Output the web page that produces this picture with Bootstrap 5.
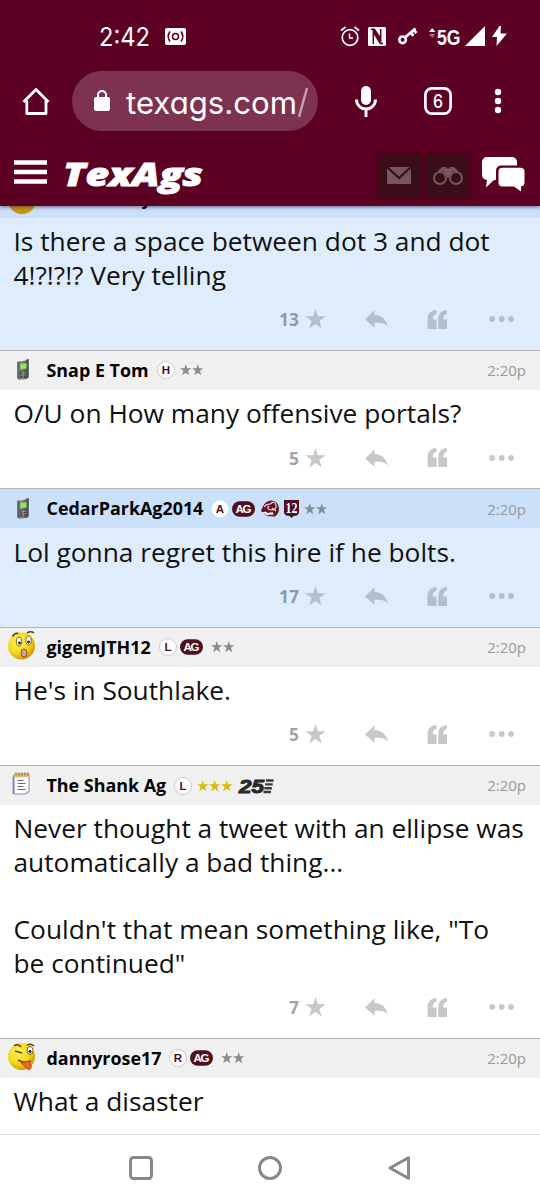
<!DOCTYPE html>
<html lang="en">
<head>
<meta charset="utf-8">
<meta name="viewport" content="width=device-width, initial-scale=1">
<title>TexAgs</title>
<link href="https://cdn.jsdelivr.net/npm/bootstrap@5.3.0/dist/css/bootstrap.min.css" rel="stylesheet">
<script src="https://cdn.jsdelivr.net/npm/bootstrap@5.3.0/dist/js/bootstrap.bundle.min.js"></script>
<style>
body{font-family:"Open Sans","Noto Sans",sans-serif;background:#fff;color:#111;width:540px;height:1200px;overflow:hidden}
svg{display:block;flex:none;overflow:visible}
.topbar{background:#5c0024;height:206px;color:#fff;z-index:2;box-shadow:0 1px 4px rgba(40,40,70,.65)}
.status{height:71px;padding-left:99px;padding-right:33px;padding-top:1px}
.browser{height:60px;padding-left:22px}
.omni{width:246px;height:60px;border-radius:30px;background:#7d3350;margin-left:22px;padding-left:22px}
.site{height:75px;padding-left:13px}
.tile{width:44px;height:44px;background:#3a0d18;box-shadow:0 0 3px #3a0d18}
.feed{margin-top:-28px}
.post{border-top:1px solid #b4b4b4}
.post-head{height:39px;background:#f0f0f0;padding-right:14px}
.post-body{padding:7.4px 13.5px 0;font-size:26.3px;line-height:33.6px;white-space:nowrap}
.post-actions{height:57.4px;padding-right:25px;padding-bottom:4px;color:#c8c8c8}
.hot{background:#deecfc}
.hot .post-head{background:#cbe0f9}
.hot .post-actions{color:#b3bfcb}
.hot .votes{color:#8f9aa6}
.votes{font-weight:700;font-size:17.5px;color:#a4a4a4;margin-right:6px}
.avatar{width:46.5px;padding-left:7px}
.who{font-weight:700;font-size:17.9px;color:#050505;white-space:nowrap}
.when{font-size:15px;color:#999}
.sysnav{height:66px;border-top:1px solid #d8d8d8;background:#fff;z-index:2}
</style>
</head>
<body class="d-flex flex-column">
<svg width="0" height="0" class="position-absolute">
<defs>
<linearGradient id="gPhone"><stop offset="0" stop-color="#4d4d4d"/><stop offset=".35" stop-color="#8d8d8d"/><stop offset="1" stop-color="#444"/></linearGradient>
<radialGradient id="gFace" cx=".38" cy=".35" r=".7"><stop offset="0" stop-color="#fff35a"/><stop offset=".6" stop-color="#f6d61c"/><stop offset="1" stop-color="#c99306"/></radialGradient>
<symbol id="star" viewBox="0 0 20 20"><path fill="currentColor" d="M10 0l2.400 7.200H20l-6.100 4.700 2.300 7.600L10 15l-6.200 4.500 2.300-7.600L0 7.200h7.600z"/></symbol>
<symbol id="reply" viewBox="0 0 23 20"><path fill="currentColor" d="M0 10.500L9.500 1.200v4.700C16.500 6 21 10 23 17.500 19.500 14 15.500 13.400 9.500 14v4.800z"/></symbol>
<symbol id="quote" viewBox="0 0 21 20"><path fill="currentColor" d="M0 20V10C0 4 3 .6 9.200 0l.6 3.500C6.800 4.500 5.500 6.500 5.500 10H9.500V20z"/><path fill="currentColor" d="M11.300 20V10C11.300 4 14.300 .6 20.200 0l.6 3.500C18 4.500 16.500 6.500 16.500 10h4V20z"/></symbol>
<symbol id="dots" viewBox="0 0 26 6"><g fill="currentColor"><circle cx="3.200" cy="3" r="2.900"/><circle cx="12.700" cy="3" r="2.900"/><circle cx="22" cy="3" r="2.900"/></g></symbol>
<symbol id="phone" viewBox="0 0 14 23"><path fill="url(#gPhone)" d="M1 3l9-1.500V.8L13 0v19l-2 2-8 .8-2-1.500z"/><path fill="#8eea5c" d="M4.200 5.200l6.500-.8v5.500l-6.500.6z"/><path fill="#484848" d="M3.800 12.500l6.700-.7v7l-6.700.8z"/><path stroke="#999" d="M4.500 14.500l5.500-.6M4.500 17l5.500-.6M7.200 12.500v6.500"/></symbol>
<symbol id="pad" viewBox="0 0 19 24"><path fill="#fafcff" stroke="#8791ad" d="M1.500 3L17 2.500V20l-3 2L2 22z"/><path fill="none" stroke="#7780ce" stroke-width="1.800" d="M1.500 4.500V22"/><path fill="#d9bd7c" d="M2 1.500L17 1v4L2 5.500z"/><path stroke="#786434" d="M4 .5v3M7 .5v3M10 .5v3M13 .5v3M16 .5v3"/><path stroke="#667" d="M5.500 8.500h6M5.500 11.500h8M5.500 14.500h6M5.500 17.500h8"/><path fill="#b7c2d6" d="M13.500 22v-2.500H17z"/></symbol>
<symbol id="starpair" viewBox="0 0 23 12"><use href="#star" width="11.500" height="11.500"/><use href="#star" x="12" width="11.500" height="11.500"/></symbol>
<symbol id="ag" viewBox="0 0 23 16"><rect y=".3" width="23" height="15.400" rx="7.700" fill="#500f20"/><text x="11.500" y="12.100" font-family="Liberation Sans" font-weight="700" font-size="11.500" fill="#fff" text-anchor="middle" textLength="16">AG</text></symbol>
</defs>
</svg>

<header class="topbar position-relative flex-shrink-0">
  <div class="status d-flex align-items-center">
    <svg width="51" height="28"><text x="0" y="23.500" textLength="51" lengthAdjust="spacingAndGlyphs" font-family="Inter" font-size="26" fill="#fff">2:42</text></svg>
    <svg width="21" height="17" viewBox="0 0 21 17" style="margin-left:15px"><rect width="21" height="17" rx="2" fill="#fff"/><g fill="none" stroke="#5c0024" stroke-width="1.600"><circle cx="10.500" cy="8.500" r="3"/><path d="M5 3.500Q1.400 8.500 5 13.500M16 3.500Q19.600 8.500 16 13.500"/></g></svg>
    <div class="ms-auto d-flex align-items-center">
      <svg width="20" height="21" viewBox="0 0 20 21" fill="none" stroke="#fff"><circle cx="10" cy="11.500" r="7.800" stroke-width="1.700"/><path stroke-width="1.800" d="M1 4.500L5.500 1M19 4.500L14.500 1"/><path stroke-width="1.500" d="M9.500 7.500v4.500H13"/></svg>
      <svg width="18" height="19" viewBox="0 0 18 19" style="margin-left:8px"><rect width="18" height="19" rx="1.500" fill="#fff"/><path fill="none" stroke="#5c0024" stroke-width="1.500" d="M5.300 17V3.500L12.700 14V2M3 2.200h3.300l6.400 9.300M5.300 5l7 11.500H15"/></svg>
      <svg width="20" height="18" viewBox="0 0 20 18" style="margin-left:12px" fill="none" stroke="#fff"><circle cx="4.600" cy="12.800" r="3.300" stroke-width="2.600"/><path stroke-width="2.800" d="M7 10.500L17.500 1.500M12.500 5.500l3 3.200M15.500 3l3 3"/></svg>
      <svg width="32" height="22" viewBox="0 0 32 22" style="margin-left:11px"><path fill="#fff" d="M0 7l3.200-4L6.400 7z"/><path fill="#a66780" d="M0 9h6.400l-3.200 4z"/><text x="8" y="20" font-family="Liberation Sans" font-weight="700" font-size="21.500" fill="#fff" textLength="23.500" lengthAdjust="spacingAndGlyphs">5G</text></svg>
      <svg width="20" height="20" style="margin-left:4px"><path fill="#fff" d="M0 20L20 0v20z"/></svg>
      <svg width="15" height="20" viewBox="0 0 15 20" style="margin-left:7px"><path fill="#fff" d="M7.500 0L0 11h5l-.5 9L15 7.500H8.500L9 0z"/></svg>
    </div>
  </div>
  <div class="browser d-flex align-items-center">
    <svg width="28" height="29" viewBox="0 0 28 29" fill="none" stroke="#fff" stroke-width="2.800" stroke-linejoin="round"><path d="M4.800 13.500V26.500H24V13.500M1.500 15L14 2.500 26.500 15"/></svg>
    <div class="omni d-flex align-items-center">
      <svg width="16" height="22" viewBox="0 0 16 22"><rect y="7" width="16" height="14" rx="2" fill="#fff"/><path d="M4 8V5a4 4 0 0 1 8 0v3" fill="none" stroke="#fff" stroke-width="2"/></svg>
      <svg width="186" height="44" style="margin-left:15px"><text x="1" y="35" textLength="171" lengthAdjust="spacingAndGlyphs" font-family="Inter" font-size="31" fill="#fff" style="font-feature-settings:'cv11' 1">texags.com</text><path d="M174 38L182 9" stroke="#c8a0b0" stroke-width="2.400"/></svg>
    </div>
    <svg width="22" height="31" viewBox="0 0 22 31" style="margin-left:37px"><rect x="6" width="10" height="19" rx="5" fill="#fff"/><path d="M1.500 13.500a9.500 9.500 0 0 0 19 0M11 23v8" fill="none" stroke="#fff" stroke-width="2.900"/></svg>
    <svg width="28" height="28" viewBox="0 0 28 28" style="margin-left:47px"><rect x="1.400" y="1.400" width="25.200" height="25.200" rx="6.500" fill="none" stroke="#fff" stroke-width="2.700"/><text x="14" y="20.500" font-family="Inter" font-size="18" font-weight="500" fill="#fff" text-anchor="middle" textLength="10" lengthAdjust="spacingAndGlyphs">6</text></svg>
    <svg width="8" height="26" style="margin-left:42px" fill="#fff"><circle cx="4" cy="4" r="3.200"/><circle cx="4" cy="13" r="3.200"/><circle cx="4" cy="22" r="3.200"/></svg>
  </div>
  <div class="site d-flex align-items-center">
    <svg width="34" height="26" style="margin-top:9px"><path stroke="#fff" stroke-width="4.600" d="M1 2.500h33M1 12h33M1 21.500h33"/></svg>
    <svg width="144" height="40" viewBox="0 0 144 40" style="margin-left:16px;margin-top:12px"><text x="0" y="31" textLength="140" lengthAdjust="spacingAndGlyphs" font-family="Open Sans" font-style="italic" font-weight="800" font-size="32" fill="#fff" stroke="#fff" stroke-width=".9">TexAgs</text></svg>
    <div class="tile d-flex align-items-center justify-content-center" style="margin-left:170px;margin-top:14px"><svg width="24" height="17"><path fill="#76565e" d="M0 0h24v17H0z"/><path d="M0 0l12 11L24 0" fill="none" stroke="#3a0d18" stroke-width="2.300"/></svg></div>
    <div class="tile d-flex align-items-center justify-content-center" style="margin-left:5px;margin-top:14px"><svg width="30" height="20" viewBox="0 0 30 20" fill="none" stroke="#76565e" stroke-width="1.900"><circle cx="7" cy="12" r="6"/><circle cx="23" cy="12" r="6"/><path fill="#76565e" stroke="none" d="M5 5L9 1l4 0 2 2 2-2h4l4 4-6 .5-3 6h-2l-3-6z"/></svg></div>
    <svg width="43" height="35" viewBox="0 0 43 35" style="margin-left:12px;margin-top:12px"><path fill="#fff" d="M5 0H30a5 5 0 0 1 5 5V18a5 5 0 0 1-5 5H12l-8 7.500 1-7.500a5 5 0 0 1-5-5V5a5 5 0 0 1 5-5z"/><path fill="#5c0024" d="M19 8.500H43V29H19a5 5 0 0 1-5-5V13.500a5 5 0 0 1 5-5z"/><path fill="#fff" d="M20.500 10.700H38.500a4 4 0 0 1 4 4V25.500a4 4 0 0 1-3.500 4V34.500l-7-5H20.500a4 4 0 0 1-4-4V14.700a4 4 0 0 1 4-4z"/></svg>
  </div>
</header>

<main class="feed flex-grow-1">
  <article class="post hot">
    <div class="post-head d-flex align-items-center"><div class="avatar"><svg width="30" height="30"><circle cx="15" cy="16" r="14" fill="#c9960f"/></svg></div><span class="who" style="margin-left:95px">y</span></div>
    <div class="post-body">Is there a space between dot 3 and dot<br>4!?!?!? Very telling</div>
    <div class="post-actions d-flex align-items-center justify-content-end"><span class="votes">13</span><svg width="21" height="20"><use href="#star"/></svg><svg width="23" height="20" style="margin-left:39px"><use href="#reply"/></svg><svg width="21" height="19" style="margin-left:39px"><use href="#quote"/></svg><svg width="26" height="6" style="margin-left:41px"><use href="#dots"/></svg></div>
  </article>
  <article class="post">
    <div class="post-head d-flex align-items-center"><div class="avatar ps-3"><svg width="14" height="22"><use href="#phone"/></svg></div><span class="who">Snap E Tom</span>
      <svg width="18" height="18" class="ms-2"><circle cx="9" cy="9" r="8.500" fill="#fff" stroke="#ccc"/><text x="9" y="13" text-anchor="middle" font-family="Liberation Sans" font-weight="700" font-size="11.500" fill="#500f20">H</text></svg>
      <svg width="23" height="12" style="margin-left:5px;color:#8c8c8c"><use href="#starpair"/></svg><span class="when ms-auto">2:20p</span></div>
    <div class="post-body">O/U on How many offensive portals?</div>
    <div class="post-actions d-flex align-items-center justify-content-end"><span class="votes">5</span><svg width="21" height="20"><use href="#star"/></svg><svg width="23" height="20" style="margin-left:39px"><use href="#reply"/></svg><svg width="21" height="19" style="margin-left:39px"><use href="#quote"/></svg><svg width="26" height="6" style="margin-left:41px"><use href="#dots"/></svg></div>
  </article>
  <article class="post hot">
    <div class="post-head d-flex align-items-center"><div class="avatar ps-3"><svg width="14" height="22"><use href="#phone"/></svg></div><span class="who">CedarParkAg2014</span>
      <svg width="18" height="18" class="ms-2"><circle cx="9" cy="9" r="8.500" fill="#fff"/><text x="9" y="13" text-anchor="middle" font-family="Liberation Sans" font-weight="700" font-size="11.500" fill="#500f20">A</text></svg>
      <svg width="23" height="16" style="margin-left:3px"><use href="#ag"/></svg>
      <svg width="18" height="18" viewBox="0 0 18 18" style="margin-left:6px"><path fill="#651426" d="M0 11Q3 1 10 .5q7 0 8 8 0 5-4 8l-9-.5-1-2z"/><path fill="none" stroke="#efd9dd" stroke-width="1.200" d="M3 7q3-4 6-2.500M9 4q5-4 6 1t-5 5q-5-1-2-4M11 8l4 3"/><path fill="#efe5e9" d="M1 12.500l4-1 1.500 1.500 5-1 1.500 2.500-6 .5-1.500 1-1-2z"/></svg>
      <svg width="15" height="18" viewBox="0 0 15 18" style="margin-left:5px"><path fill="#500f20" d="M0 0h15v13l-2 2.500-3.500.5-2 2-2-2-3.500-.5L0 13z"/><text x="7.500" y="12.500" text-anchor="middle" textLength="12" lengthAdjust="spacingAndGlyphs" font-family="Liberation Serif" font-weight="700" font-size="14" fill="#fff">12</text></svg>
      <svg width="23" height="12" style="margin-left:5px;color:#858d98"><use href="#starpair"/></svg><span class="when ms-auto">2:20p</span></div>
    <div class="post-body">Lol gonna regret this hire if he bolts.</div>
    <div class="post-actions d-flex align-items-center justify-content-end"><span class="votes">17</span><svg width="21" height="20"><use href="#star"/></svg><svg width="23" height="20" style="margin-left:39px"><use href="#reply"/></svg><svg width="21" height="19" style="margin-left:39px"><use href="#quote"/></svg><svg width="26" height="6" style="margin-left:41px"><use href="#dots"/></svg></div>
  </article>
  <article class="post">
    <div class="post-head d-flex align-items-center"><div class="avatar"><svg width="30" height="30" viewBox="0 0 30 30"><circle cx="14.500" cy="14" r="13.500" fill="url(#gFace)"/><g fill="#fff" stroke="#80600c"><ellipse cx="12" cy="9.500" rx="2.700" ry="4.500"/><ellipse cx="21.500" cy="8.500" rx="2.700" ry="4.300"/></g><circle cx="12.500" cy="11" r="1.400" fill="#222"/><circle cx="21.500" cy="10" r="1.400" fill="#222"/><path d="M5.500 4.500q2-4 6-3M20 1q4-2.500 7 0" fill="none" stroke="#574310" stroke-width="1.500"/><ellipse cx="17" cy="21" rx="3" ry="4" fill="#c7a9a1" stroke="#8b5216"/></svg></div><span class="who">gigemJTH12</span>
      <svg width="18" height="18" class="ms-2"><circle cx="9" cy="9" r="8.500" fill="#fff" stroke="#ccc"/><text x="9" y="13" text-anchor="middle" font-family="Liberation Sans" font-weight="700" font-size="11.500" fill="#500f20">L</text></svg>
      <svg width="23" height="16" style="margin-left:3px"><use href="#ag"/></svg><svg width="23" height="12" style="margin-left:8px;color:#8c8c8c"><use href="#starpair"/></svg><span class="when ms-auto">2:20p</span></div>
    <div class="post-body">He's in Southlake.</div>
    <div class="post-actions d-flex align-items-center justify-content-end"><span class="votes">5</span><svg width="21" height="20"><use href="#star"/></svg><svg width="23" height="20" style="margin-left:39px"><use href="#reply"/></svg><svg width="21" height="19" style="margin-left:39px"><use href="#quote"/></svg><svg width="26" height="6" style="margin-left:41px"><use href="#dots"/></svg></div>
  </article>
  <article class="post">
    <div class="post-head d-flex align-items-center"><div class="avatar" style="padding-left:12px;padding-bottom:4px"><svg width="19" height="24"><use href="#pad"/></svg></div><span class="who">The Shank Ag</span>
      <svg width="18" height="18" class="ms-2"><circle cx="9" cy="9" r="8.500" fill="#fff" stroke="#ccc"/><text x="9" y="13" text-anchor="middle" font-family="Liberation Sans" font-weight="700" font-size="11.500" fill="#500f20">L</text></svg>
      <svg width="36" height="12" style="margin-left:5px;color:#d5bc0d"><use href="#star" width="11.500" height="11.500"/><use href="#star" x="12" width="11.500" height="11.500"/><use href="#star" x="24" width="11.500" height="11.500"/></svg>
      <svg width="36" height="16" style="margin-left:6px"><text x="0" y="15" textLength="25" lengthAdjust="spacingAndGlyphs" font-family="Liberation Sans" font-weight="700" font-style="italic" font-size="19" fill="#292929" stroke="#292929" stroke-width="1">25</text><path stroke="#3a3a3a" stroke-width="2.400" d="M27 2.500H34.500M26.200 6.400h7.500M25.300 10.300h7.500M24.500 14h7.500"/></svg><span class="when ms-auto">2:20p</span></div>
    <div class="post-body">Never thought a tweet with an ellipse was<br>automatically a bad thing...<br><br>Couldn't that mean something like, "To<br>be continued"</div>
    <div class="post-actions d-flex align-items-center justify-content-end"><span class="votes">7</span><svg width="21" height="20"><use href="#star"/></svg><svg width="23" height="20" style="margin-left:39px"><use href="#reply"/></svg><svg width="21" height="19" style="margin-left:39px"><use href="#quote"/></svg><svg width="26" height="6" style="margin-left:41px"><use href="#dots"/></svg></div>
  </article>
  <article class="post">
    <div class="post-head d-flex align-items-center"><div class="avatar"><svg width="30" height="30" viewBox="0 0 30 30"><circle cx="14.500" cy="13.500" r="13.500" fill="url(#gFace)"/><path d="M7 3q4-3 7 1M8 8l7 2M20 2q4-2 7 1" fill="none" stroke="#594310" stroke-width="1.500"/><ellipse cx="23" cy="7.500" rx="3" ry="4" fill="#fff" stroke="#80600c"/><circle cx="23" cy="8.500" r="1.500" fill="#222"/><path d="M11 17q6 4 13 1" fill="none" stroke="#764d0a" stroke-width="1.700"/><path d="M14 20l8-2 2.500 6-2.500 3z" fill="#ec6530" stroke="#b94c18"/></svg></div><span class="who">dannyrose17</span>
      <svg width="18" height="18" class="ms-2"><circle cx="9" cy="9" r="8.500" fill="#fff" stroke="#ccc"/><text x="9" y="13" text-anchor="middle" font-family="Liberation Sans" font-weight="700" font-size="11.500" fill="#500f20">R</text></svg>
      <svg width="23" height="16" style="margin-left:3px"><use href="#ag"/></svg><svg width="23" height="12" style="margin-left:8px;color:#8c8c8c"><use href="#starpair"/></svg><span class="when ms-auto">2:20p</span></div>
    <div class="post-body">What a disaster</div>
  </article>
</main>

<nav class="sysnav position-relative flex-shrink-0 d-flex justify-content-center align-items-center" aria-label="System">
  <svg width="24" height="24" fill="none" stroke="#888" stroke-width="3"><rect x="1.500" y="1.500" width="21" height="21" rx="3"/></svg>
  <svg width="24" height="24" fill="none" stroke="#888" stroke-width="3" style="margin-left:105px"><circle cx="12" cy="12" r="10.500"/></svg>
  <svg width="24" height="24" fill="none" stroke="#888" stroke-width="3" stroke-linejoin="round" style="margin-left:105px"><path d="M3 12L21.500 1.700V22.300z"/></svg>
</nav>
</body>
</html>
